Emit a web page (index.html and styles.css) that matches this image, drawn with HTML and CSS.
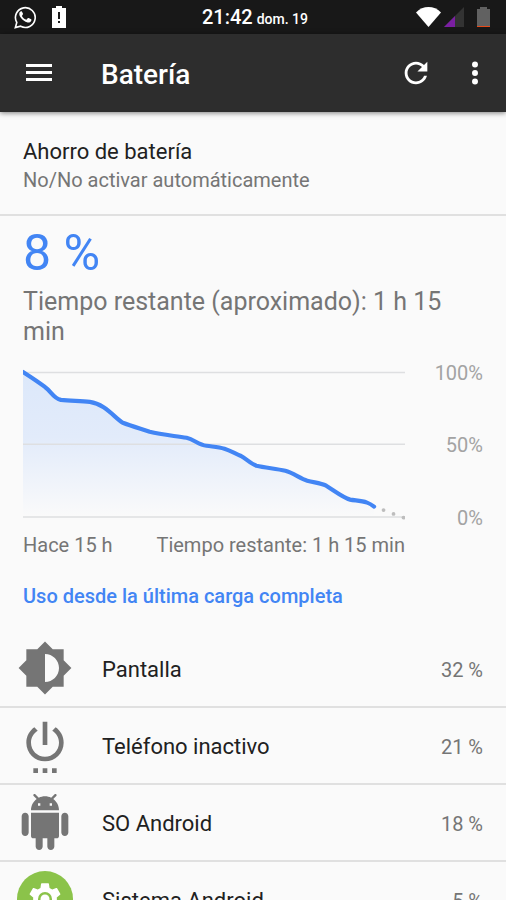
FILE: index.html
```html
<!DOCTYPE html>
<html lang="es">
<head>
<meta charset="utf-8">
<meta name="viewport" content="width=device-width, initial-scale=1">
<title>Batería</title>
<link rel="stylesheet" href="styles.css">
</head>
<body>
<div class="screen">
  <div class="status">
    <div class="status-side">
      <svg class="icon-whatsapp" viewBox="0 0 24 24" aria-hidden="true">
        <path fill="none" stroke="#fff" stroke-width="1.7" d="M1.4 22.6l1.500-5.400A10.3 10.3 0 1 1 6.900 21.100z"/>
        <path fill="#fff" d="M8.500 6.200c-.3-.6-.6-.6-1-.6-.9 0-2 1-2 2.700 0 1.700 1.200 3.300 1.500 3.600 1.700 2.500 4.100 4.400 7.200 5.300 1.700.4 3.600-.7 3.900-2.200.1-.5.1-1-.1-1.100l-2.800-1.400c-.4-.1-.6-.1-.9.300l-1.100 1.300c-.2.300-.5.300-.9.100-1.700-.8-3-2-3.900-3.600-.2-.3 0-.6.200-.8.500-.6 1-1.100.8-1.600z"/>
      </svg>
      <svg class="icon-alert" viewBox="0 0 14 22" aria-hidden="true">
        <path fill="#fff" d="M0 2h4V0h6v2h4v20H0z"/>
        <path fill="#1a1a1a" d="M6 6h2v7H6zm0 9h2v2H6z"/>
      </svg>
    </div>
    <div class="clock"><span class="time">21:42</span> <span class="date">dom. 19</span></div>
    <div class="status-side status-right">
      <svg class="icon-wifi" viewBox="0 0 25 20" aria-hidden="true"><path fill="#fff" d="M0 5.500C7-1.800 18-1.800 25 5.500L12.500 20z"/></svg>
      <svg class="icon-signal" viewBox="0 0 20 20" aria-hidden="true"><path fill="#333" d="M0 20L20 0v20z"/><path fill="#7b1fa2" d="M0 20L11 9v11z"/></svg>
      <svg class="icon-battery" viewBox="0 0 13 21" aria-hidden="true"><path fill="#616161" d="M0 2h3V0h7v2h3v18H0z"/><path fill="#e64a19" d="M0 19h13v1H0z"/></svg>
    </div>
  </div>

  <header class="appbar">
    <button class="icon-button" aria-label="Menú">
      <svg viewBox="0 0 26 18" class="icon-menu" aria-hidden="true"><path fill="#fff" d="M0 0h26v3H0zM0 7h26v3H0zM0 14h26v3H0z"/></svg>
    </button>
    <h1>Batería</h1>
    <button class="icon-button" aria-label="Actualizar">
      <svg viewBox="0 0 24 24" class="icon-24" aria-hidden="true"><path fill="#fff" d="M17.650 6.350C16.200 4.900 14.210 4 12 4c-4.420 0-7.990 3.580-7.990 8s3.570 8 7.990 8c3.730 0 6.840-2.550 7.730-6h-2.080c-.82 2.330-3.040 4-5.650 4-3.310 0-6-2.690-6-6s2.690-6 6-6c1.660 0 3.140.69 4.220 1.780L13 11h7V4l-2.350 2.350z"/></svg>
    </button>
    <button class="icon-button" aria-label="Más opciones">
      <svg viewBox="0 0 24 24" class="icon-24" aria-hidden="true"><g fill="#fff"><circle cx="12" cy="6" r="2.100"/><circle cx="12" cy="12" r="2.100"/><circle cx="12" cy="18" r="2.100"/></g></svg>
    </button>
  </header>

  <main>
    <section class="saver">
      <h2>Ahorro de batería</h2>
      <p>No/No activar automáticamente</p>
    </section>

    <section class="summary">
      <div class="level">8 %</div>
      <p class="remaining">Tiempo restante (aproximado): 1 h 15 min</p>
      <div class="chart">
        <svg class="plot" viewBox="0 0 383 169" role="img" aria-label="Nivel de batería">
          <defs>
            <linearGradient id="area" x1="0" y1="11" x2="0" y2="156" gradientUnits="userSpaceOnUse">
              <stop offset="0" stop-color="#dce8fa"/>
              <stop offset="0.450" stop-color="#e2ebfa"/>
              <stop offset="1" stop-color="#fafafa"/>
            </linearGradient>
            <clipPath id="frame"><path d="M0 0h383v169H0z"/></clipPath>
          </defs>
          <path fill="url(#area)" d="M0 11L22 26C28 30 31 39 40 39L67 42C81 43 92 57 100 62L127 71C139 74 152 75 164 76C173 78 178 84 187 85C204 86 220 96 230 103C241 108 252 107 263 110C271 112 280 120 290 121C308 123 320 138 331 139C346 141 342 141 352 146V156H0z"/>
          <path fill="none" stroke="#dedfe1" stroke-width="1.500" d="M0 11.500h383M0 83.500h383M0 156.500h383"/>
          <path clip-path="url(#frame)" fill="none" stroke="#4285f4" stroke-width="4.200" stroke-linecap="round" stroke-linejoin="round" d="M0 11Q14 20 22 26C29 31 30 37 38 39C48 40 58 40 67 41C82 43 91 56 100 62C108 65 118 68 127 71C139 74 152 75 164 77C172 79 176 84 184 85C191 86 196 86 202 88C208 90 213 93 218 95C224 98 228 103 234 105C243 107 254 108 263 110C271 112 278 118 285 120C292 122 298 122 304 125C312 130 321 137 328 139C333 140 339 140 345 142Q348 143 352 146"/>
          <g fill="#bdbdbd"><circle cx="361.500" cy="149.500" r="1.900"/><circle cx="371.500" cy="153.300" r="1.900"/><circle cx="381.500" cy="157" r="1.900"/></g>
        </svg>
        <div class="scale"><span>100%</span><span>50%</span><span>0%</span></div>
        <div class="range"><span>Hace 15 h</span><span>Tiempo restante: 1 h 15 min</span></div>
      </div>
    </section>

    <h2 class="category">Uso desde la última carga completa</h2>
    <ul class="usage">
      <li>
        <svg viewBox="0 0 24 24" aria-hidden="true"><path d="M20 15.310L23.310 12 20 8.690V4h-4.690L12 .69 8.690 4H4v4.690L.69 12 4 15.310V20h4.690L12 23.310 15.310 20H20v-4.690zM12 18V6c3.310 0 6 2.690 6 6s-2.690 6-6 6z"/></svg>
        <span class="name">Pantalla</span><span class="value">32 %</span>
      </li>
      <li>
        <svg viewBox="0 0 24 24" aria-hidden="true"><path d="M7 24h2v-2H7v2zm4 0h2v-2h-2v2zm2-22h-2v10h2V2zm3.560 2.440l-1.450 1.450C16.840 6.940 18 8.830 18 11c0 3.310-2.690 6-6 6s-6-2.690-6-6c0-2.170 1.160-4.060 2.880-5.120L7.440 4.440C5.360 5.880 4 8.280 4 11c0 4.420 3.580 8 8 8s8-3.580 8-8c0-2.720-1.360-5.120-3.440-6.560zM15 24h2v-2h-2v2z"/></svg>
        <span class="name">Teléfono inactivo</span><span class="value">21 %</span>
      </li>
      <li>
        <svg viewBox="0 0 24 24" aria-hidden="true"><path d="M6 18c0 .55.45 1 1 1h1v3.500c0 .83.67 1.500 1.500 1.500s1.500-.67 1.500-1.500V19h2v3.500c0 .83.67 1.500 1.500 1.500s1.500-.67 1.500-1.500V19h1c.55 0 1-.45 1-1V8H6v10zM3.500 8C2.670 8 2 8.670 2 9.500v7c0 .83.67 1.500 1.500 1.500S5 17.330 5 16.500v-7C5 8.670 4.330 8 3.500 8zm17 0c-.83 0-1.500.67-1.500 1.500v7c0 .83.67 1.500 1.500 1.500s1.500-.67 1.500-1.500v-7c0-.83-.67-1.500-1.500-1.500zm-4.970-5.840l1.300-1.300c.2-.2.2-.51 0-.71-.2-.2-.51-.2-.71 0l-1.480 1.480C13.850 1.230 12.950 1 12 1c-.96 0-1.860.23-2.660.63L7.850.15c-.2-.2-.51-.2-.71 0-.2.2-.2.51 0 .71l1.310 1.310C6.970 3.260 6 5.010 6 7h12c0-1.990-.97-3.750-2.470-4.840zM10 5H9V4h1v1zm5 0h-1V4h1v1z"/></svg>
        <span class="name">SO Android</span><span class="value">18 %</span>
      </li>
      <li>
        <svg viewBox="0 0 56 56" aria-hidden="true">
          <circle cx="28" cy="28" r="28" fill="#8bc34a"/>
          <path transform="translate(9 9) scale(1.583)" fill="#fff" d="M19.430 12.980c.04-.32.07-.64.07-.98s-.03-.66-.07-.98l2.110-1.650c.19-.15.24-.42.12-.64l-2-3.460c-.12-.22-.39-.3-.61-.22l-2.490 1c-.52-.4-1.080-.73-1.690-.98l-.38-2.650C14.460 2.180 14.250 2 14 2h-4c-.25 0-.46.18-.49.42l-.38 2.650c-.61.25-1.170.59-1.690.98l-2.490-1c-.23-.09-.49 0-.61.22l-2 3.460c-.13.22-.07.49.12.64l2.110 1.650c-.04.32-.07.65-.07.98s.03.66.07.98l-2.110 1.650c-.19.15-.24.42-.12.64l2 3.460c.12.22.39.3.61.22l2.490-1c.52.4 1.080.73 1.690.98l.38 2.650c.03.24.24.42.49.42h4c.25 0 .46-.18.49-.42l.38-2.650c.61-.25 1.170-.59 1.690-.98l2.490 1c.23.09.49 0 .61-.22l2-3.460c.12-.22.07-.49-.12-.64l-2.110-1.650z"/>
          <circle cx="28" cy="28" r="7" fill="#8bc34a"/><circle cx="28" cy="28" r="4.500" fill="#fff"/>
        </svg>
        <span class="name">Sistema Android</span><span class="value">5 %</span>
      </li>
    </ul>
  </main>
</div>
</body>
</html>
```
FILE: styles.css
```css
* { box-sizing: border-box; }

body {
  margin: 0;
  background: #fafafa;
  color: #212121;
  font-family: Roboto, "Liberation Sans", sans-serif;
}

h1, h2, p, ul { margin: 0; padding: 0; }

svg { display: block; }

.screen {
  height: 100vh;
  display: flex;
  flex-direction: column;
  overflow: hidden;
}

.status {
  flex: none;
  height: 34px;
  padding: 0 16px 0 14px;
  display: flex;
  align-items: center;
  background: #181818;
  color: #fff;
}

.status-side {
  flex: 1;
  display: flex;
  align-items: center;
  gap: 15px;
}

.status-right { justify-content: flex-end; gap: 3px; }

.clock {
  padding: 2px 0 0 6px;
  font-weight: 500;
  white-space: nowrap;
  line-height: 24px;
}

.time { font-size: 20px; }
.date { font-size: 14px; }

.icon-whatsapp { width: 23px; height: 23px; }
.icon-alert { width: 14px; height: 22px; }
.icon-wifi { width: 25px; height: 20px; }
.icon-signal { width: 20px; height: 20px; }
.icon-battery { width: 13px; height: 21px; margin-left: 10px; }

.appbar {
  flex: none;
  position: relative;
  height: 78px;
  padding: 0 3px 0 11px;
  display: flex;
  align-items: center;
  background: #2d2d2d;
  color: #fff;
  box-shadow: 0 1px 5px rgba(0, 0, 0, 0.5);
}

.appbar h1 {
  flex: 1;
  padding: 3px 0 0 34px;
  font-size: 28px;
  font-weight: 500;
  line-height: 34px;
}

.icon-button {
  width: 56px;
  height: 56px;
  padding: 0;
  border: 0;
  background: none;
  display: grid;
  place-items: center;
}

.icon-button + .icon-button { margin-left: 3px; }

.icon-menu { width: 26px; height: 18px; }
.icon-24 { width: 34px; height: 34px; }

main { flex: 1; min-height: 0; overflow: hidden; }

.saver {
  padding: 26px 23px 20px;
  border-bottom: 2px solid #e0e0e0;
}

.saver h2 { font-size: 22px; font-weight: 400; line-height: 28px; }
.saver p { font-size: 20px; line-height: 28px; color: #757575; }

.summary { padding: 7px 23px 0; }

.level { font-size: 50px; line-height: 60px; color: #4285f4; }

.remaining {
  padding-top: 4px;
  font-size: 25px;
  line-height: 30px;
  color: #757575;
}

.chart {
  padding-top: 14px;
  display: grid;
  grid-template-columns: 1fr 78px;
  font-size: 20px;
  line-height: 24px;
}

.plot { width: 100%; }

.scale {
  display: flex;
  flex-direction: column;
  justify-content: space-between;
  align-items: flex-end;
  color: #a3a3a3;
}

.range {
  padding-top: 3px;
  display: flex;
  justify-content: space-between;
  color: #757575;
}

.category {
  padding: 27px 23px 23px;
  font-size: 20px;
  font-weight: 500;
  line-height: 24px;
  color: #4285f4;
}

.usage { list-style: none; }

.usage li {
  height: 77px;
  padding: 0 23px 0 17px;
  display: flex;
  align-items: center;
  border-bottom: 2px solid #e0e0e0;
}

.usage svg { width: 56px; height: 56px; fill: #757575; }
.name { flex: 1; padding: 3px 0 0 29px; font-size: 22px; line-height: 28px; }
.value { padding-top: 3px; font-size: 20px; line-height: 24px; color: #757575; }
```
